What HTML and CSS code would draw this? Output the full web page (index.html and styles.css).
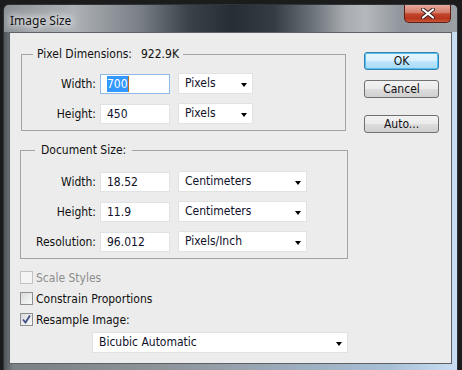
FILE: index.html
```html
<!DOCTYPE html>
<html lang="en">
<head>
    <meta charset="UTF-8">
    <title>Image Size</title>
    <link rel="stylesheet" href="styles.css">
</head>
<body>
    <div class="window">
        <div class="titlebar">
            <span class="title">Image Size</span>
            <div class="close">
                <svg width="14" height="11" viewBox="0 0 14 11">
                    <path d="M2 1.5 L12 9.5 M12 1.5 L2 9.5" stroke="#3a2220" stroke-width="4" stroke-linecap="round"/>
                    <path d="M2 1.5 L12 9.5 M12 1.5 L2 9.5" stroke="#ffffff" stroke-width="2.2" stroke-linecap="round"/>
                </svg>
            </div>
        </div>

        <div class="client">
            <div class="main">
                <fieldset class="group group-pixels">
                    <legend>Pixel Dimensions:<span class="amount">922.9K</span></legend>
                    <div class="row">
                        <label class="label">Width:</label>
                        <div class="field focused"><span class="selected">700</span><span class="caret"></span></div>
                        <div class="combo short">Pixels</div>
                    </div>
                    <div class="row">
                        <label class="label">Height:</label>
                        <div class="field">450</div>
                        <div class="combo short">Pixels</div>
                    </div>
                </fieldset>

                <fieldset class="group group-document">
                    <legend>Document Size:</legend>
                    <div class="row">
                        <label class="label">Width:</label>
                        <div class="field">18.52</div>
                        <div class="combo long">Centimeters</div>
                    </div>
                    <div class="row">
                        <label class="label">Height:</label>
                        <div class="field">11.9</div>
                        <div class="combo long">Centimeters</div>
                    </div>
                    <div class="row">
                        <label class="label">Resolution:</label>
                        <div class="field">96.012</div>
                        <div class="combo long">Pixels/Inch</div>
                    </div>
                </fieldset>

                <div class="check disabled"><span class="box"></span>Scale Styles</div>
                <div class="check"><span class="box"></span>Constrain Proportions</div>
                <div class="check">
                    <span class="box">
                        <svg width="11" height="11" viewBox="0 0 11 11">
                            <path d="M2 5.5 L4.5 8.5 L9 1.5" fill="none" stroke="#3d4f86" stroke-width="1.8"/>
                        </svg>
                    </span>Resample Image:
                </div>
                <div class="combo method">Bicubic Automatic</div>
            </div>

            <div class="buttons">
                <button class="btn default">OK</button>
                <button class="btn">Cancel</button>
                <button class="btn auto">Auto...</button>
            </div>
        </div>
    </div>
</body>
</html>
```

FILE: styles.css
```css
body {
    margin: 0;
    width: 462px;
    height: 370px;
    overflow: hidden;
    background-color: #1c1c1c;
    font-family: "DejaVu Sans", sans-serif;
    font-stretch: condensed;
    font-size: 12px;
    color: #111;
}

.window {
    margin: 4px 0 0 3px;
    width: 455px;
    height: 372px;
    box-sizing: border-box;
    border: 1px solid #2f3439;
    border-radius: 6px 6px 0 0;
    background: linear-gradient(to right, #4f5459 0, #7b8086 2%, #8e949a 35%, #a7bfd5 85%, #c9def0 100%);
    display: flex;
    flex-direction: column;
    overflow: hidden;
}

.titlebar {
    height: 27px;
    display: flex;
    align-items: flex-start;
    background: linear-gradient(to right, #8d9297 0px, #aeb2b6 70px, #7a8087 135px, #3a4149 185px, #262d35 228px, #353c44 270px, #6d747b 310px, #a9adb2 342px, #b4b8bc 362px, #8f959b 398px, #9ca1a6 455px);
}

.title {
    margin: 7px 0 0 6px;
    font-family: "Noto Sans", sans-serif;
    font-stretch: normal;
    font-size: 12px;
    color: #141414;
    text-shadow: 0 0 6px #fff, 0 0 10px #fff, 0 0 14px #eef;
}

.close {
    margin-left: auto;
    margin-right: 6px;
    width: 47px;
    height: 18px;
    box-sizing: border-box;
    border: 1px solid #5b1f16;
    border-top: none;
    border-radius: 0 0 5px 5px;
    background: linear-gradient(#e6a99a 0%, #d37d6a 45%, #c3462d 52%, #b7361c 80%, #c9583c 100%);
    display: flex;
    justify-content: center;
    align-items: center;
}

.client {
    margin: 0 5px;
    height: 332px;
    box-sizing: border-box;
    border: 1px solid #5d6268;
    background-color: #ececec;
    display: flex;
}

.main {
    margin-left: 10px;
    width: 328px;
    padding-top: 14px;
}

.group {
    margin: 0;
    border: 1px solid #a3a3a3;
    box-sizing: border-box;
}

.group legend {
    padding: 0 4px;
    line-height: 14px;
}

.group-pixels {
    margin-left: 1px;
    width: 325px;
    padding: 12px 0 6px 0;
}

.group-pixels legend {
    margin-left: 11px;
}

.group-document {
    margin-top: 12px;
    width: 328px;
    padding: 14px 0 6px 0;
}

.group-document legend {
    margin-left: 14px;
    padding: 0 6px;
}

.amount {
    margin-left: 9px;
}

.row {
    display: flex;
    align-items: center;
    height: 21px;
    margin-bottom: 9px;
}

.row:last-of-type {
    margin-bottom: 0;
}

.label {
    text-align: right;
    margin-right: 4px;
}

.group-pixels .label {
    width: 74px;
}

.group-document .label {
    width: 75px;
}

.field {
    width: 70px;
    height: 20px;
    box-sizing: border-box;
    border: 1px solid #dfe2e6;
    background-color: #fff;
    padding-left: 6px;
    line-height: 18px;
    color: #10102a;
    margin-right: 8px;
    display: flex;
    align-items: center;
}

.field.focused {
    border-color: #8ebbe6;
}

.selected {
    background-color: #3399ff;
    color: #fff;
    line-height: 16px;
}

.caret {
    width: 1px;
    height: 16px;
    background-color: #c06a20;
}

.combo {
    position: relative;
    height: 21px;
    box-sizing: border-box;
    border: 1px solid #e2e2e2;
    background-color: #fff;
    padding-left: 6px;
    line-height: 19px;
    color: #10102a;
}

.combo::after {
    content: "";
    position: absolute;
    right: 5px;
    top: 9px;
    border-left: 3.5px solid transparent;
    border-right: 3.5px solid transparent;
    border-top: 4px solid #000;
}

.combo.short {
    width: 75px;
}

.combo.long {
    width: 129px;
}

.combo.method {
    margin: 2px 0 0 72px;
    width: 256px;
}

.check {
    height: 21px;
    display: flex;
    align-items: center;
}

.group-document + .check {
    margin-top: 8px;
}

.box {
    width: 13px;
    height: 13px;
    box-sizing: border-box;
    border: 1px solid #8e8f8f;
    background: linear-gradient(135deg, #d9dadb, #fafafa);
    margin-right: 3px;
    display: flex;
    align-items: center;
    justify-content: center;
}

.check.disabled {
    color: #8d8d8d;
}

.check.disabled .box {
    border-color: #c2c2c2;
    background: #f4f4f4;
}

.buttons {
    margin: 19px 0 0 16px;
    width: 75px;
    display: flex;
    flex-direction: column;
}

.btn {
    height: 18px;
    padding: 0;
    box-sizing: border-box;
    border: 1px solid #707070;
    border-radius: 3px;
    background: linear-gradient(#f2f2f2 0%, #ebebeb 48%, #dddddd 52%, #cfcfcf 100%);
    font-family: inherit;
    font-stretch: condensed;
    font-size: 12px;
    line-height: 16px;
    color: #111;
    margin-bottom: 10px;
}

.btn.default {
    border-color: #3c7fb1;
    background: linear-gradient(#eaf6fd 0%, #d9f0fc 48%, #bee6fd 52%, #a7d9f5 100%);
    box-shadow: inset 0 0 0 1px #4cc3f0;
}

.btn.auto {
    margin-top: 7px;
}
```
